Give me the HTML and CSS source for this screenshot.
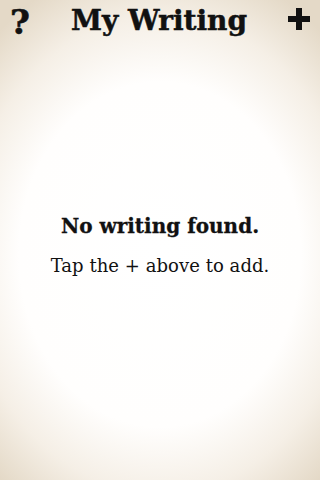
FILE: index.html
```html
<!DOCTYPE html>
<html>
<head>
<meta charset="utf-8">
<link rel="stylesheet" href="styles.css">
</head>
<body>
<div class="screen">
  <header class="bar">
    <span class="btn help">?</span>
    <h1 class="title">My Writing</h1>
    <span class="btn add">
      <svg width="22" height="22" viewBox="0 0 22 22"><path d="M8 0h6v8h8v6h-8v8H8v-8H0V8h8z" fill="#111"/></svg>
    </span>
  </header>
  <main class="empty">
    <p class="empty-title">No writing found.</p>
    <p class="empty-sub">Tap the + above to add.</p>
  </main>
</div>
</body>
</html>
```
FILE: styles.css
```css
html, body { margin: 0; padding: 0; }
body { width: 320px; height: 480px; overflow: hidden; }
.screen {
  width: 320px; height: 480px;
  display: flex; flex-direction: column;
  background: radial-gradient(ellipse 76% 62% at 50% 53%, #ffffff 0%, #fffefd 58%, #f5efe6 80%, #e4d9c7 100%);
  color: #111;
}
.bar {
  display: flex; align-items: center; justify-content: space-between;
  height: 44px; padding: 0 10px 0 10px;
}
.btn { display: flex; align-items: center; justify-content: center; }
.help {
  font-family: "DejaVu Serif", serif; font-weight: 900; font-size: 34px;
  width: 20px; margin-top: 0px;
  -webkit-text-stroke: 0.6px #111;
}
.add { width: 22px; height: 22px; margin-top: -6px; }
.title {
  margin: 0; font-family: "DejaVu Serif", serif; font-weight: bold;
  font-size: 28px; letter-spacing: 0; margin-top: -4px;
  -webkit-text-stroke: 0.5px #111;
}
.empty {
  flex: 1; display: flex; flex-direction: column; align-items: center;
  padding-top: 170px;
}
.empty .empty-title {
  margin: 0;
  font-family: "DejaVu Serif", serif; font-weight: bold; font-size: 20px; letter-spacing: 0;
  -webkit-text-stroke: 0.3px #111;
}
.empty .empty-sub {
  margin: 17px 0 0;
  font-family: "DejaVu Serif", serif; font-size: 18px; letter-spacing: 0.05px;
}
```
